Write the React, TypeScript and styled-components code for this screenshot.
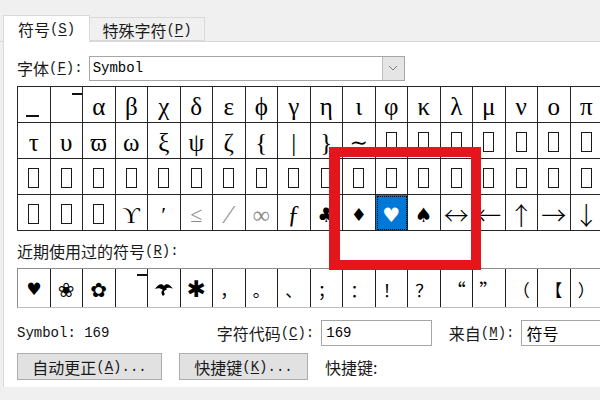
import React from "react";
import styled, { createGlobalStyle } from "styled-components";

const GlobalStyle = createGlobalStyle`
  html, body {
    margin: 0;
    padding: 0;
  }
  body {
    width: 600px;
    height: 400px;
    overflow: hidden;
    background: #f0f0f0;
    color: #000;
    font-family: "Noto Sans CJK SC", sans-serif;
    font-size: 16px;
  }
`;

const Dialog = styled.div`
  width: 600px;
  height: 400px;
  overflow: hidden;
  padding-top: 15px;
  box-sizing: border-box;
`;

const TabStrip = styled.div`
  display: flex;
  align-items: flex-end;
  height: 26px;
  padding-left: 3px;
  border-bottom: 1px solid #d9d9d9;
  width: 640px;
`;

const Tab = styled.div<{ $active?: boolean }>`
  box-sizing: border-box;
  display: flex;
  align-items: center;
  justify-content: center;
  width: ${(p) => (p.$active ? "87px" : "116px")};
  height: ${(p) => (p.$active ? "27px" : "24px")};
  margin-bottom: ${(p) => (p.$active ? "-1px" : "0")};
  margin-left: ${(p) => (p.$active ? "0" : "-1px")};
  background: ${(p) => (p.$active ? "#fff" : "#f0f0f0")};
  border: 1px solid #d9d9d9;
  border-bottom: ${(p) => (p.$active ? "none" : "1px solid #d9d9d9")};
  padding-top: ${(p) => (p.$active ? "0" : "1px")};
  line-height: 1;
`;

const Panel = styled.div`
  position: relative;
  width: 640px;
  height: 345px;
  margin-left: 3px;
  box-sizing: border-box;
  background: #fff;
  border-left: 1px solid #d9d9d9;
  padding: 14px 0 0 13px;
  display: flex;
  flex-direction: column;
`;

const Label = styled.span`
  display: inline-flex;
  align-items: center;
  white-space: nowrap;
  line-height: 1;
  color: #1a1a1a;
`;

const Mono = styled.span`
  font-family: "Liberation Mono", "DejaVu Sans Mono", monospace;
  font-size: 14px;
`;

const Key = styled.span`
  text-decoration: underline;
  text-underline-offset: 2px;
`;

const Mnemonic = ({ k, colon }: { k: string; colon?: boolean }) => (
  <Mono>
    (<Key>{k}</Key>){colon ? ":" : ""}
  </Mono>
);

const FontRow = styled.div`
  display: flex;
  align-items: center;
  height: 24px;
`;

const Combo = styled.div<{ $width: number }>`
  box-sizing: border-box;
  display: flex;
  align-items: center;
  width: ${(p) => p.$width}px;
  height: 25px;
  margin-left: 6px;
  border: 1px solid #a6a6a6;
  background: #fff;
`;

const ComboText = styled.span`
  flex: 1;
  padding-left: 3px;
  font-family: "Liberation Mono", "DejaVu Sans Mono", monospace;
  font-size: 14px;
`;

const DropButton = styled.div`
  box-sizing: border-box;
  width: 22px;
  height: 23px;
  background: #e5e5e5;
  border-left: 1px solid #bcbcbc;
  display: flex;
  align-items: center;
  justify-content: center;
`;

const SymbolGrid = styled.div`
  display: grid;
  grid-template-columns: repeat(18, 32.5px);
  grid-auto-rows: 36px;
  margin-top: 6px;
  border-top: 1px solid #262626;
  border-left: 1px solid #262626;
  width: max-content;
`;

type Face = "serif" | "sans" | "cjk";

const faces: Record<Face, string> = {
  serif: '"Liberation Serif", "DejaVu Serif", "DejaVu Sans", serif',
  sans: '"DejaVu Sans", sans-serif',
  cjk: '"Noto Sans CJK SC", "DejaVu Sans", sans-serif',
};

const Cell = styled.div<{
  $selected?: boolean;
  $light?: boolean;
  $size?: number;
  $face?: Face;
}>`
  box-sizing: border-box;
  position: relative;
  display: flex;
  align-items: center;
  justify-content: center;
  border-right: 1px solid #262626;
  border-bottom: 1px solid #262626;
  font-family: ${(p) => faces[p.$face ?? "serif"]};
  font-weight: ${(p) => (p.$face === "cjk" ? 300 : 400)};
  font-size: ${(p) => p.$size ?? 25}px;
  line-height: 1;
  padding-top: 4px;
  overflow: hidden;
  color: ${(p) => (p.$selected ? "#fff" : p.$light ? "#8a8a8a" : "#000")};
  background: ${(p) => (p.$selected ? "#0078d7" : "#fff")};
  outline: ${(p) => (p.$selected ? "1px dotted #000" : "none")};
  outline-offset: -2px;
`;

const Tofu = styled.span`
  box-sizing: border-box;
  width: 11px;
  height: 20px;
  border: 1px solid #1a1a1a;
  margin-top: -2px;
`;

const Bar = styled.span<{ $top?: boolean }>`
  width: ${(p) => (p.$top ? "10px" : "13px")};
  height: 2px;
  background: #111;
  align-self: ${(p) => (p.$top ? "flex-start" : "flex-end")};
  margin: ${(p) => (p.$top ? "2px 0 0 auto" : "0 0 5px -3px")};
`;

const SectionLabel = styled.div`
  margin-top: 10px;
  height: 20px;
  display: flex;
  align-items: center;
`;

const RecentRow = styled.div`
  display: grid;
  grid-template-columns: repeat(18, 32.5px);
  height: 40px;
  margin-top: 7px;
  border-top: 1px solid #8c8c8c;
  border-left: 1px solid #8c8c8c;
  border-bottom: 1px solid #bdbdbd;
  width: max-content;
  box-sizing: border-box;
`;

const RecentCell = styled.div<{ $size?: number; $cjk?: boolean }>`
  display: flex;
  align-items: center;
  justify-content: center;
  border-right: 1px solid #1e1e1e;
  font-family: ${(p) =>
    p.$cjk ? '"Noto Sans CJK SC", sans-serif' : '"DejaVu Sans", sans-serif'};
  font-size: ${(p) => p.$size ?? 17}px;
  line-height: 1;
  padding-top: 3px;
`;

const InfoRow = styled.div`
  display: flex;
  align-items: center;
  height: 26px;
  margin-top: 12px;
`;

const CodeInfo = styled.span`
  width: 231px;
  font-family: "Liberation Mono", "DejaVu Sans Mono", monospace;
  font-size: 14px;
  color: #111;
`;

const TextBox = styled.div<{ $width: number; $gap: number }>`
  box-sizing: border-box;
  width: ${(p) => p.$width}px;
  height: 26px;
  margin-left: ${(p) => p.$gap}px;
  margin-right: 17px;
  border: 1px solid #a6a6a6;
  display: flex;
  align-items: center;
  padding-left: 4px;
  font-family: "Liberation Mono", "DejaVu Sans Mono", monospace;
  font-size: 14px;
  white-space: nowrap;
  overflow: hidden;
`;

const CjkInBox = styled.span`
  font-family: "Noto Sans CJK SC", sans-serif;
  font-size: 16px;
`;

const ButtonRow = styled.div`
  display: flex;
  align-items: center;
  gap: 17px;
  margin-top: 7px;
`;

const DialogButton = styled.div<{ $width: number }>`
  box-sizing: border-box;
  width: ${(p) => p.$width}px;
  height: 27px;
  background: #e1e1e1;
  border: 1px solid #adadad;
  display: flex;
  align-items: center;
  justify-content: center;
  white-space: nowrap;
  line-height: 1;
  color: #1a1a1a;
`;

const Annotation = styled.div`
  position: absolute;
  left: 325px;
  top: 105px;
  width: 152px;
  height: 123px;
  box-sizing: border-box;
  border: 10px solid #e3161e;
  border-left-width: 11px;
  pointer-events: none;
`;

type Glyph = {
  t?: string;
  kind?: "tofu" | "barTop" | "barBottom";
  light?: boolean;
  size?: number;
  face?: Face;
};

const g = (t: string, extra: Partial<Glyph> = {}): Glyph => ({ t, ...extra });
const tofu = (n: number): Glyph[] =>
  Array.from({ length: n }, () => ({ kind: "tofu" as const }));
const arrow = (t: string): Glyph => g(t, { size: 25, face: "cjk" });

const rows: Glyph[][] = [
  [
    { kind: "barBottom" },
    { kind: "barTop" },
    ..."αβχδεϕγηιφκλμνοπ".split("").map((c) => g(c)),
  ],
  [..."τυϖωξψζ{|}".split("").map((c) => g(c)), g("∼", { size: 22 }), ...tofu(7)],
  tofu(18),
  [
    ...tofu(3),
    g("ϒ", { size: 24 }),
    g("′", { size: 22 }),
    g("≤", { light: true, size: 22 }),
    g("⁄", { light: true }),
    g("∞", { light: true, size: 24 }),
    g("ƒ"),
    g("♣", { size: 20, face: "sans" }),
    g("♦", { size: 18, face: "sans" }),
    g("♥", { size: 20, face: "sans" }),
    g("♠", { size: 20, face: "sans" }),
    arrow("↔"),
    arrow("←"),
    arrow("↑"),
    arrow("→"),
    arrow("↓"),
  ],
];

const Bird = () => (
  <svg width="20" height="18" viewBox="0 0 20 18">
    <path
      d="M1 8 C4 3 8 2 10 5 C12 2 16 3 19 8 C15 6 13 7 12 8 L13 9 C10 9 9 11 11 13 L9 15 C7 13 7 10 9 9 C6 7 4 7 1 8 Z"
      fill="#000"
    />
  </svg>
);

const recent: { node: React.ReactNode; size?: number; cjk?: boolean }[] = [
  { node: "♥", size: 17 },
  { node: "❀", size: 20 },
  { node: "✿", size: 20 },
  { node: <Bar $top /> },
  { node: <Bird /> },
  { node: "✱", size: 23 },
  { node: "，", cjk: true },
  { node: "。", cjk: true },
  { node: "、", cjk: true },
  { node: "；", cjk: true },
  { node: "：", cjk: true },
  { node: "！", cjk: true },
  { node: "？", cjk: true },
  { node: "“", cjk: true, size: 19 },
  { node: "”", cjk: true, size: 19 },
  { node: "（", cjk: true },
  { node: "【", cjk: true },
  { node: "）", cjk: true },
];

export default function App() {
  return (
    <Dialog>
      <GlobalStyle />
      <TabStrip>
        <Tab $active>
          <Label>
            符号<Mnemonic k="S" />
          </Label>
        </Tab>
        <Tab>
          <Label>
            特殊字符<Mnemonic k="P" />
          </Label>
        </Tab>
      </TabStrip>
      <Panel>
        <FontRow>
          <Label>
            字体<Mnemonic k="F" colon />
          </Label>
          <Combo $width={316}>
            <ComboText>Symbol</ComboText>
            <DropButton>
              <svg width="10" height="6" viewBox="0 0 10 6">
                <path d="M1 1 L5 5 L9 1" fill="none" stroke="#7a7a7a" strokeWidth="1" />
              </svg>
            </DropButton>
          </Combo>
        </FontRow>

        <SymbolGrid>
          {rows.map((row, r) =>
            row.map((c, i) => (
              <Cell
                key={`${r}-${i}`}
                $selected={r === 3 && i === 11}
                $light={c.light}
                $size={c.size}
                $face={c.face}
              >
                {c.kind === "tofu" && <Tofu />}
                {c.kind === "barTop" && <Bar $top />}
                {c.kind === "barBottom" && <Bar />}
                {c.t}
              </Cell>
            ))
          )}
        </SymbolGrid>

        <SectionLabel>
          <Label>
            近期使用过的符号<Mnemonic k="R" colon />
          </Label>
        </SectionLabel>
        <RecentRow>
          {recent.map((r, i) => (
            <RecentCell key={i} $size={r.size} $cjk={r.cjk}>
              {r.node}
            </RecentCell>
          ))}
        </RecentRow>

        <InfoRow>
          <CodeInfo>Symbol: 169</CodeInfo>
          <Label>
            字符代码<Mnemonic k="C" colon />
          </Label>
          <TextBox $width={127} $gap={7}>
            169
          </TextBox>
          <Label>
            来自<Mnemonic k="M" colon />
          </Label>
          <TextBox $width={120} $gap={7}>
            <CjkInBox>符号</CjkInBox>
          </TextBox>
        </InfoRow>

        <ButtonRow>
          <DialogButton $width={145}>
            自动更正<Mnemonic k="A" />
            <Mono>...</Mono>
          </DialogButton>
          <DialogButton $width={129}>
            快捷键<Mnemonic k="K" />
            <Mono>...</Mono>
          </DialogButton>
          <Label>快捷键:</Label>
        </ButtonRow>

        <Annotation />
      </Panel>
    </Dialog>
  );
}
